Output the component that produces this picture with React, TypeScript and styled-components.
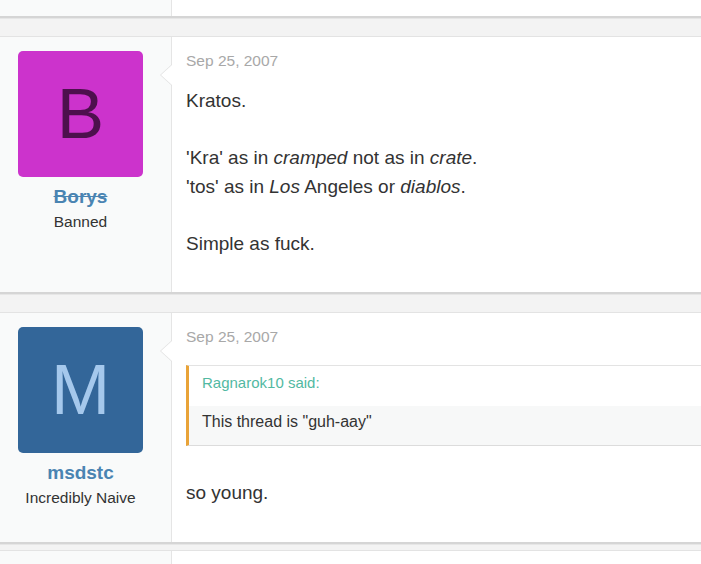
import * as React from 'react';
import styled, { createGlobalStyle } from 'styled-components';

const GlobalStyle = createGlobalStyle`
    html, body {
        margin: 0;
        padding: 0;
        background: #f3f3f3;
        overflow: hidden;
    }
    body {
        font-family: 'Liberation Sans', Arial, Helvetica, sans-serif;
        color: #333;
    }
`;

const MessageList = styled.ol`
    list-style: none;
    margin: 0;
    padding: 0;
    display: flex;
    flex-direction: column;
`;

const Message = styled.li<{ $gap: number; $stub?: number }>`
    display: flex;
    margin-top: ${({ $gap }) => $gap}px;
    background: #fff;
    border-top: ${({ $gap }) => ($gap ? '1px solid #e3e3e3' : 'none')};
    border-bottom: 2px solid #d5d5d5;
    box-shadow: 0 1px 0 #e6e6e6;
    height: ${({ $stub }) => ($stub ? `${$stub}px` : 'auto')};
`;

const UserPane = styled.div`
    width: 172px;
    flex-shrink: 0;
    box-sizing: border-box;
    padding: 14px 0 0 18px;
    background: #f9fafa;
    border-right: 1px solid #e5e5e5;
`;

const UserInfo = styled.div`
    width: 125px;
    text-align: center;
`;

const Avatar = styled.div<{ $bg: string; $fg: string }>`
    width: 125px;
    height: 126px;
    border-radius: 5px;
    background: ${({ $bg }) => $bg};
    color: ${({ $fg }) => $fg};
    font-size: 71px;
    line-height: 126px;
    text-align: center;
`;

const Username = styled.div<{ $banned?: boolean }>`
    margin-top: 9px;
    font-size: 19px;
    font-weight: bold;
    line-height: 22px;
    color: #4a84b2;
    text-decoration: ${({ $banned }) => ($banned ? 'line-through' : 'none')};
`;

const UserTitle = styled.div`
    margin-top: 4px;
    font-size: 15.5px;
    line-height: 20px;
    color: #333;
`;

const ContentPane = styled.div`
    position: relative;
    flex: 1;
    padding: 14px 0 34px 14px;

    &::before,
    &::after {
        content: '';
        position: absolute;
        width: 0;
        height: 0;
        border-style: solid;
        border-color: transparent;
    }
    &::before {
        left: -12px;
        top: 27px;
        border-width: 11px 12px 11px 0;
        border-right-color: #e2e2e2;
    }
    &::after {
        left: -11px;
        top: 28px;
        border-width: 10px 11px 10px 0;
        border-right-color: #fff;
    }
`;

const DateLine = styled.div`
    font-size: 15.5px;
    line-height: 20px;
    color: #a8a8a8;
`;

const Body = styled.div`
    display: flow-root;
    margin-top: 16px;
    font-size: 19px;
    line-height: 28.5px;
    color: #333;
`;

const Quote = styled.blockquote`
    margin: 2px 0 33px;
    border-top: 1px solid #e3e3e3;
    border-bottom: 1px solid #dcdcdc;
    border-left: 3px solid #e9a338;
`;

const QuoteHeader = styled.div`
    padding: 7px 13px 13px;
    font-size: 15px;
    line-height: 20px;
    color: #52b9a2;
    background: #fff;
`;

const QuoteBody = styled.div`
    padding: 6px 13px 13px;
    font-size: 16px;
    line-height: 20px;
    color: #333;
    background: #f7f8f8;
`;

type User = { name: string; title: string; letter: string; bg: string; fg: string; banned?: boolean };

const UserBlock = ({ user }: { user: User }) => (
    <UserPane>
        <UserInfo>
            <Avatar $bg={user.bg} $fg={user.fg}>
                {user.letter}
            </Avatar>
            <Username $banned={user.banned}>{user.name}</Username>
            <UserTitle>{user.title}</UserTitle>
        </UserInfo>
    </UserPane>
);

const borys: User = { name: 'Borys', title: 'Banned', letter: 'B', bg: '#cc33cc', fg: '#4d104d', banned: true };
const msdstc: User = { name: 'msdstc', title: 'Incredibly Naive', letter: 'M', bg: '#336699', fg: '#a5c8ec' };

const App = (): JSX.Element => (
    <>
        <GlobalStyle />
        <MessageList>
            <Message $gap={0} $stub={16}>
                <UserPane />
                <div />
            </Message>

            <Message $gap={18}>
                <UserBlock user={borys} />
                <ContentPane>
                    <DateLine>Sep 25, 2007</DateLine>
                    <Body>
                        Kratos.
                        <br />
                        <br />
                        'Kra' as in <i>cramped</i> not as in <i>crate</i>.
                        <br />
                        'tos' as in <i>Los</i> Angeles or <i>diablos</i>.
                        <br />
                        <br />
                        Simple as fuck.
                    </Body>
                </ContentPane>
            </Message>

            <Message $gap={18}>
                <UserBlock user={msdstc} />
                <ContentPane>
                    <DateLine>Sep 25, 2007</DateLine>
                    <Body>
                        <Quote>
                            <QuoteHeader>Ragnarok10 said:</QuoteHeader>
                            <QuoteBody>This thread is "guh-aay"</QuoteBody>
                        </Quote>
                        so young.
                    </Body>
                </ContentPane>
            </Message>

            <Message $gap={6} $stub={24}>
                <UserPane />
                <div />
            </Message>
        </MessageList>
    </>
);

export default App;
